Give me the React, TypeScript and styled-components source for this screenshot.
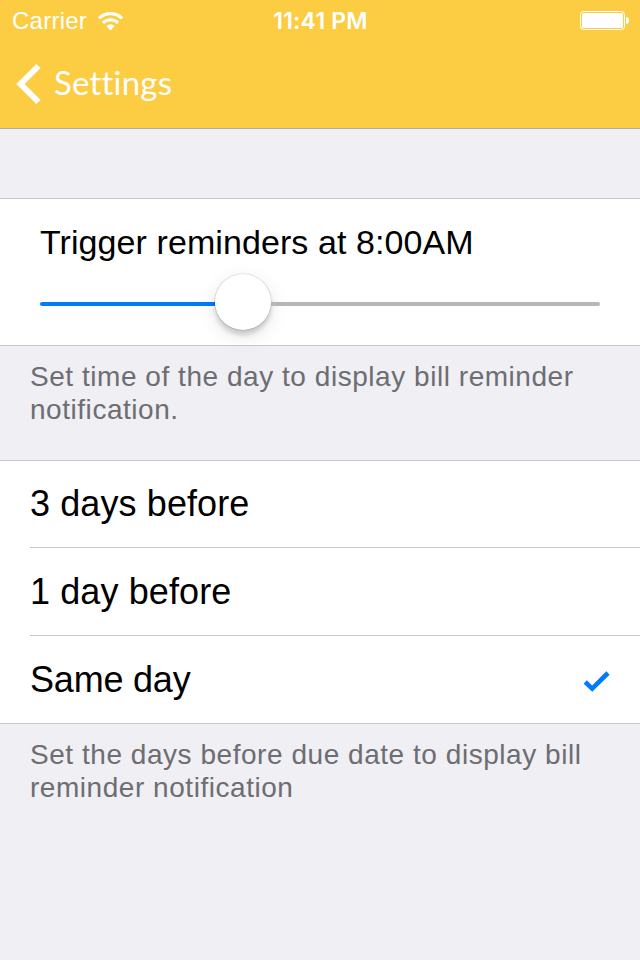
import React from "react";
import styled, { createGlobalStyle } from "styled-components";

const Global = createGlobalStyle`
  body { margin: 0; background: #efeff4; }
  * { box-sizing: border-box; }
`;
const Screen = styled.main`
  width: 640px; height: 960px; overflow: hidden; background: #efeff4;
  display: flex; flex-direction: column;
  font-family: "Liberation Sans", Arial, sans-serif; color: #000;
`;
const Header = styled.header`
  height: 129px; background: #fccc43; border-bottom: 1px solid #aeacaa; color: #fff; flex: none;
`;
const StatusBar = styled.div`
  height: 40px; padding: 0 11px 0 12px;
  display: grid; grid-template-columns: 1fr auto 1fr; align-items: center;
`;
const Carrier = styled.div`
  display: flex; align-items: center; gap: 11px;
  font-size: 24px; line-height: 28px; letter-spacing: 0.25px; padding-top: 2px;
`;
const Clock = styled.time`
  font: 600 23px/28px Inter, sans-serif; letter-spacing: 0.2px;
  padding-top: 1px; white-space: nowrap;
`;
const Battery = styled.div`display: flex; justify-content: flex-end;`;
const Nav = styled.nav`
  height: 88px; padding-left: 16px; display: flex; align-items: center; gap: 12px;
`;
const Title = styled.h1`
  margin: 0; font: 400 33px/40px Lato, sans-serif; letter-spacing: 0.2px;
  font-variant-ligatures: none; padding-bottom: 4px;
`;
const Icon = styled.svg`display: block; flex: none; fill: none;`;
const Group = styled.section`
  background: #fff; flex: none;
  border-top: 1px solid #c8c7cc; border-bottom: 1px solid #c8c7cc;
`;
const SliderGroup = styled(Group)`margin-top: 69px; height: 148px; padding: 21px 40px 0;`;
const SliderLabel = styled.div`
  font-size: 34px; line-height: 44px; letter-spacing: 0.08px; white-space: nowrap;
`;
const Slider = styled.div`height: 56px; margin-top: 10px; display: flex; align-items: center;`;
const Track = styled.div<{ $filled?: boolean }>`
  height: 4px; margin-top: 4px;
  border-radius: ${p => p.$filled ? "2px 0 0 2px" : "0 2px 2px 0"};
  background: ${p => p.$filled ? "#007aff" : "#b7b7b7"};
  flex: ${p => p.$filled ? "0 0 175px" : "1"};
`;
const Thumb = styled.div`
  width: 56px; height: 56px; border-radius: 50%; background: #fff; flex: none;
  box-shadow: 0 0 1px 0.5px rgba(0,0,0,.16), 0 5px 5px rgba(0,0,0,.16), 0 6px 20px rgba(0,0,0,.1);
`;
const Note = styled.p`
  margin: 0; padding: 14px 30px 0; height: 114px; color: #6d6d72; flex: none;
  font-size: 28px; line-height: 33px; letter-spacing: 0.54px;
`;
const Row = styled.div<{ $tall?: boolean; $tracking?: number }>`
  height: ${p => p.$tall ? 88 : 87}px; margin-left: 30px; padding-right: 30px;
  display: flex; align-items: center; justify-content: space-between;
  font-size: 36px; letter-spacing: ${p => p.$tracking ?? 0.1}px;
  &:not(:last-child) { border-bottom: 1px solid #c8c7cc; }
`;
const Check = styled(Icon)`margin-top: 3px;`;

export default function App() {
  return (
    <>
      <Global />
      <Screen>
        <Header>
          <StatusBar>
            <Carrier>
              Carrier
              <Icon width="25" height="19" viewBox="0 0 25 19" stroke="#fff" strokeWidth="3.1">
                <path d="M1 6.4a16.3 16.3 0 0 1 23 0" />
                <path d="M4.9 10.9a10.8 10.8 0 0 1 15.2 0" />
                <path d="M8.3 14.1a5.9 5.9 0 0 1 8.4 0L12.5 18.5Z" fill="#fff" stroke="none" />
              </Icon>
            </Carrier>
            <Clock>11:41 PM</Clock>
            <Battery>
              <Icon width="49" height="20" viewBox="0 0 49 20">
                <rect x=".5" y="1.5" width="44" height="18" rx="3" stroke="#fff" />
                <rect x="2" y="3" width="41" height="15" rx="1.5" fill="#fff" />
                <path d="M46 7q3 0 3 3.5t-3 3.5z" fill="#fff" />
              </Icon>
            </Battery>
          </StatusBar>
          <Nav>
            <Icon width="26" height="42" viewBox="0 0 26 42">
              <path d="M22.5 3 4.5 21l18 18" stroke="#fff" strokeWidth="6" />
            </Icon>
            <Title>Settings</Title>
          </Nav>
        </Header>
        <SliderGroup>
          <SliderLabel>Trigger reminders at 8:00AM</SliderLabel>
          <Slider><Track $filled /><Thumb /><Track /></Slider>
        </SliderGroup>
        <Note>Set time of the day to display bill reminder notification.</Note>
        <Group>
          <Row>3 days before</Row>
          <Row $tall>1 day before</Row>
          <Row $tracking={-0.2}>
            Same day
            <Check width="26" height="21" viewBox="0 0 26 21">
              <path d="m1.2 11 7 6.6L24 2" stroke="#007aff" strokeWidth="4.6" />
            </Check>
          </Row>
        </Group>
        <Note>Set the days before due date to display bill reminder notification</Note>
      </Screen>
    </>
  );
}
